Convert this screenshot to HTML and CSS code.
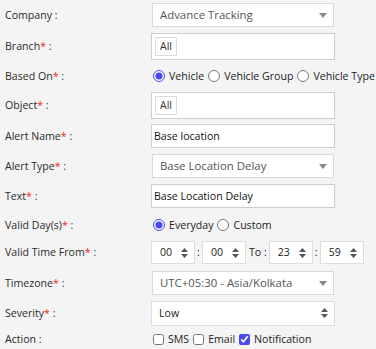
FILE: index.html
```html
<!DOCTYPE html>
<html>
<head>
<meta charset="utf-8">
<link rel="stylesheet" href="styles.css">
</head>
<body>
<form class="form">
  <div class="row h30">
    <div class="label">Company :</div>
    <div class="field"><div class="s2">Advance Tracking<span class="caret"></span></div></div>
  </div>
  <div class="row h32">
    <div class="label">Branch<span class="req">*</span> :</div>
    <div class="field"><div class="tagbox"><span class="tag">All</span></div></div>
  </div>
  <div class="row h28">
    <div class="label">Based On<span class="req">*</span> :</div>
    <div class="field opts">
      <label class="opt"><input type="radio" name="b" checked> Vehicle</label>
      <label class="opt"><input type="radio" name="b"> Vehicle Group</label>
      <label class="opt"><input type="radio" name="b"> Vehicle Type</label>
    </div>
  </div>
  <div class="row h30">
    <div class="label">Object<span class="req">*</span> :</div>
    <div class="field"><div class="tagbox"><span class="tag">All</span></div></div>
  </div>
  <div class="row h32">
    <div class="label">Alert Name<span class="req">*</span> :</div>
    <div class="field"><div class="txt">Base location</div></div>
  </div>
  <div class="row h28">
    <div class="label">Alert Type<span class="req">*</span> :</div>
    <div class="field"><div class="s2">Base Location Delay<span class="caret"></span></div></div>
  </div>
  <div class="row h32">
    <div class="label">Text<span class="req">*</span> :</div>
    <div class="field"><div class="txt">Base Location Delay</div></div>
  </div>
  <div class="row h26">
    <div class="label">Valid Day(s)<span class="req">*</span> :</div>
    <div class="field opts">
      <label class="opt"><input type="radio" name="d" checked> Everyday</label>
      <label class="opt"><input type="radio" name="d"> Custom</label>
    </div>
  </div>
  <div class="row h28">
    <div class="label">Valid Time From<span class="req">*</span> :</div>
    <div class="field times">
      <div class="tsel">00<svg class="ud" viewBox="0 0 7 10" width="7" height="10"><path d="M3.5 0L7 4H0z M3.5 10L0 6h7z"/></svg></div>
      <span class="sep">:</span>
      <div class="tsel">00<svg class="ud" viewBox="0 0 7 10" width="7" height="10"><path d="M3.5 0L7 4H0z M3.5 10L0 6h7z"/></svg></div>
      <span class="sep to">To :</span>
      <div class="tsel">23<svg class="ud" viewBox="0 0 7 10" width="7" height="10"><path d="M3.5 0L7 4H0z M3.5 10L0 6h7z"/></svg></div>
      <span class="sep">:</span>
      <div class="tsel">59<svg class="ud" viewBox="0 0 7 10" width="7" height="10"><path d="M3.5 0L7 4H0z M3.5 10L0 6h7z"/></svg></div>
    </div>
  </div>
  <div class="row h34">
    <div class="label">Timezone<span class="req">*</span> :</div>
    <div class="field"><div class="s2">UTC+05:30 - Asia/Kolkata<span class="caret"></span></div></div>
  </div>
  <div class="row h26">
    <div class="label">Severity<span class="req">*</span> :</div>
    <div class="field"><div class="nsel">Low<svg class="ud" viewBox="0 0 7 10" width="7" height="10"><path d="M3.5 0L7 4H0z M3.5 10L0 6h7z"/></svg></div></div>
  </div>
  <div class="row h26">
    <div class="label">Action :</div>
    <div class="field opts">
      <label class="opt"><input type="checkbox"> SMS</label>
      <label class="opt"><input type="checkbox"> Email</label>
      <label class="opt"><input type="checkbox" checked> Notification</label>
    </div>
  </div>
</form>
</body>
</html>
```

FILE: styles.css
```css
html, body {
  margin: 0;
  padding: 0;
  background: #f4f4f4;
}
body {
  font-family: "Open Sans", "DejaVu Sans", sans-serif;
  font-size: 10.6px;
  color: #2b2b2b;
  width: 376px;
  height: 349px;
  overflow: hidden;
}
.form {
  display: flex;
  flex-direction: column;
}
.row {
  display: flex;
  align-items: center;
}
.h26 { height: 26px; }
.h28 { height: 28px; }
.h30 { height: 30px; }
.h32 { height: 32px; }
.h34 { height: 34px; }
.label {
  width: 151px;
  padding-left: 5px;
  box-sizing: border-box;
  flex: none;
  color: #2b2b2b;
}
.req {
  color: #f01e1e;
}
.field {
  width: 184px;
  flex: none;
}
.s2 {
  position: relative;
  margin: 0 1px;
  height: 24px;
  box-sizing: border-box;
  border: 1px solid #d9d9d9;
  background: #fff;
  font-size: 11.4px;
  color: #555;
  padding-left: 7px;
  line-height: 22px;
}
.caret {
  position: absolute;
  right: 6px;
  top: 9px;
  width: 0;
  height: 0;
  border-left: 4px solid transparent;
  border-right: 4px solid transparent;
  border-top: 5px solid #888;
}
.tagbox {
  height: 27px;
  box-sizing: border-box;
  border: 1px solid #ccc;
  background: #fff;
  padding: 3px;
  display: flex;
  align-items: flex-start;
}
.tag {
  display: inline-block;
  border: 1px solid #ddd;
  background: #fff;
  height: 19px;
  box-sizing: border-box;
  padding: 0 4px;
  font-size: 10.5px;
  line-height: 17px;
  color: #333;
}
.txt {
  height: 24px;
  box-sizing: border-box;
  border: 1px solid #ccc;
  background: #fff;
  padding-left: 2px;
  line-height: 22px;
  color: #111;
}
.opts {
  width: auto;
  display: flex;
  align-items: center;
  gap: 4px;
  padding-left: 2px;
  white-space: nowrap;
}
.opt {
  display: flex;
  align-items: center;
  color: #222;
}
.opt input {
  margin: 0 4px 0 0;
  width: 11px;
  height: 11px;
  accent-color: #4a4af0;
}
.opts .opt input[type=radio] {
  width: 12px;
  height: 12px;
}
.times {
  width: auto;
  display: flex;
  align-items: center;
}
.tsel {
  position: relative;
  width: 44px;
  height: 23px;
  box-sizing: border-box;
  border: 1px solid #ddd;
  background: #fff;
  line-height: 21px;
  padding-left: 8px;
  color: #222;
}
.ud {
  position: absolute;
  right: 6px;
  top: 6px;
  fill: #555;
}
.sep {
  width: 7px;
  text-align: center;
  color: #222;
}
.sep.to {
  width: auto;
  padding: 0 2px 0 3px;
}
.nsel {
  position: relative;
  height: 25px;
  box-sizing: border-box;
  border: 1px solid #ddd;
  background: #fff;
  line-height: 23px;
  padding-left: 7px;
  color: #222;
}
```
